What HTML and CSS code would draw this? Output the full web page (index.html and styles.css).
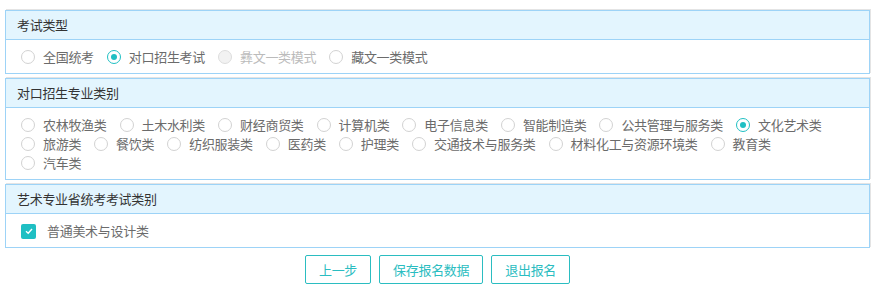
FILE: index.html
```html
<!DOCTYPE html>
<html>
<head>
	<meta charset="UTF-8">
	<title>报名信息</title>
	<link rel="stylesheet" href="styles.css">
</head>
<body>
	<div class="page">
		<div class="panel">
			<div class="panel-head">考试类型</div>
			<div class="panel-body options">
				<label class="opt"><span class="radio"></span>全国统考</label>
				<label class="opt"><span class="radio checked"></span>对口招生考试</label>
				<label class="opt disabled"><span class="radio"></span>彝文一类模式</label>
				<label class="opt"><span class="radio"></span>藏文一类模式</label>
			</div>
		</div>

		<div class="panel">
			<div class="panel-head">对口招生专业类别</div>
			<div class="panel-body options">
				<label class="opt"><span class="radio"></span>农林牧渔类</label>
				<label class="opt"><span class="radio"></span>土木水利类</label>
				<label class="opt"><span class="radio"></span>财经商贸类</label>
				<label class="opt"><span class="radio"></span>计算机类</label>
				<label class="opt"><span class="radio"></span>电子信息类</label>
				<label class="opt"><span class="radio"></span>智能制造类</label>
				<label class="opt"><span class="radio"></span>公共管理与服务类</label>
				<label class="opt"><span class="radio checked"></span>文化艺术类</label>
				<label class="opt"><span class="radio"></span>旅游类</label>
				<label class="opt"><span class="radio"></span>餐饮类</label>
				<label class="opt"><span class="radio"></span>纺织服装类</label>
				<label class="opt"><span class="radio"></span>医药类</label>
				<label class="opt"><span class="radio"></span>护理类</label>
				<label class="opt"><span class="radio"></span>交通技术与服务类</label>
				<label class="opt"><span class="radio"></span>材料化工与资源环境类</label>
				<label class="opt"><span class="radio"></span>教育类</label>
				<label class="opt"><span class="radio"></span>汽车类</label>
			</div>
		</div>

		<div class="panel">
			<div class="panel-head">艺术专业省统考考试类别</div>
			<div class="panel-body options">
				<label class="opt">
					<span class="check">
						<svg width="10" height="10" viewBox="0 0 10 10"><path d="M2 5.2 L4.2 7.2 L8 3" fill="none" stroke="#fff" stroke-width="1.4"/></svg>
					</span>普通美术与设计类
				</label>
			</div>
		</div>

		<div class="actions">
			<button class="btn">上一步</button>
			<button class="btn">保存报名数据</button>
			<button class="btn">退出报名</button>
		</div>
	</div>
</body>
</html>
```

FILE: styles.css
```css
body {
	margin: 0;
	background: #fff;
	font-family: "Noto Sans CJK SC", "Liberation Sans", sans-serif;
	font-size: 13px;
	color: #666;
}
.page {
	padding: 10px 17px 0 5px;
}
.panel {
	border: 1px solid #9dd3f7;
	box-shadow: 1px -1px 0 #e4e4e4;
	margin-bottom: 4px;
}
.panel-head {
	height: 28px;
	line-height: 28px;
	padding: 0 11px;
	background: #e3f5fe;
	border-bottom: 1px solid #9dd3f7;
	color: #333;
	letter-spacing: -0.3px;
}
.panel-body {
	padding: 8px 15px 7px;
}
.options {
	display: flex;
	flex-wrap: wrap;
	row-gap: 1px;
}
.opt {
	display: inline-flex;
	align-items: center;
	height: 18px;
	line-height: 18px;
	margin-right: 13px;
	color: #6b6b6b;
	letter-spacing: -0.3px;
}
.opt.disabled {
	color: #bbb;
}
.radio {
	box-sizing: border-box;
	width: 14px;
	height: 14px;
	margin-right: 8px;
	border: 1px solid #d2d2d2;
	border-radius: 50%;
	background: #fff;
	display: flex;
	align-items: center;
	justify-content: center;
}
.radio.checked {
	border-color: #1fbfc3;
}
.radio.checked::after {
	content: "";
	width: 6px;
	height: 6px;
	border-radius: 50%;
	background: #1fbfc3;
}
.opt.disabled .radio {
	background: #f2f2f2;
	border-color: #ddd;
}
.check {
	width: 15px;
	height: 15px;
	margin-right: 11px;
	border-radius: 2px;
	background: #1fbfc3;
	display: flex;
	align-items: center;
	justify-content: center;
}
.actions {
	display: flex;
	justify-content: center;
	gap: 8px;
	padding-top: 3px;
}
.btn {
	height: 29px;
	padding: 0 13px;
	background: #fff;
	border: 1px solid #2bbdc1;
	border-radius: 2px;
	color: #2bbdc1;
	font-family: "Noto Sans CJK SC", "Liberation Sans", sans-serif;
	font-size: 13px;
	letter-spacing: -0.3px;
	cursor: pointer;
}
```
